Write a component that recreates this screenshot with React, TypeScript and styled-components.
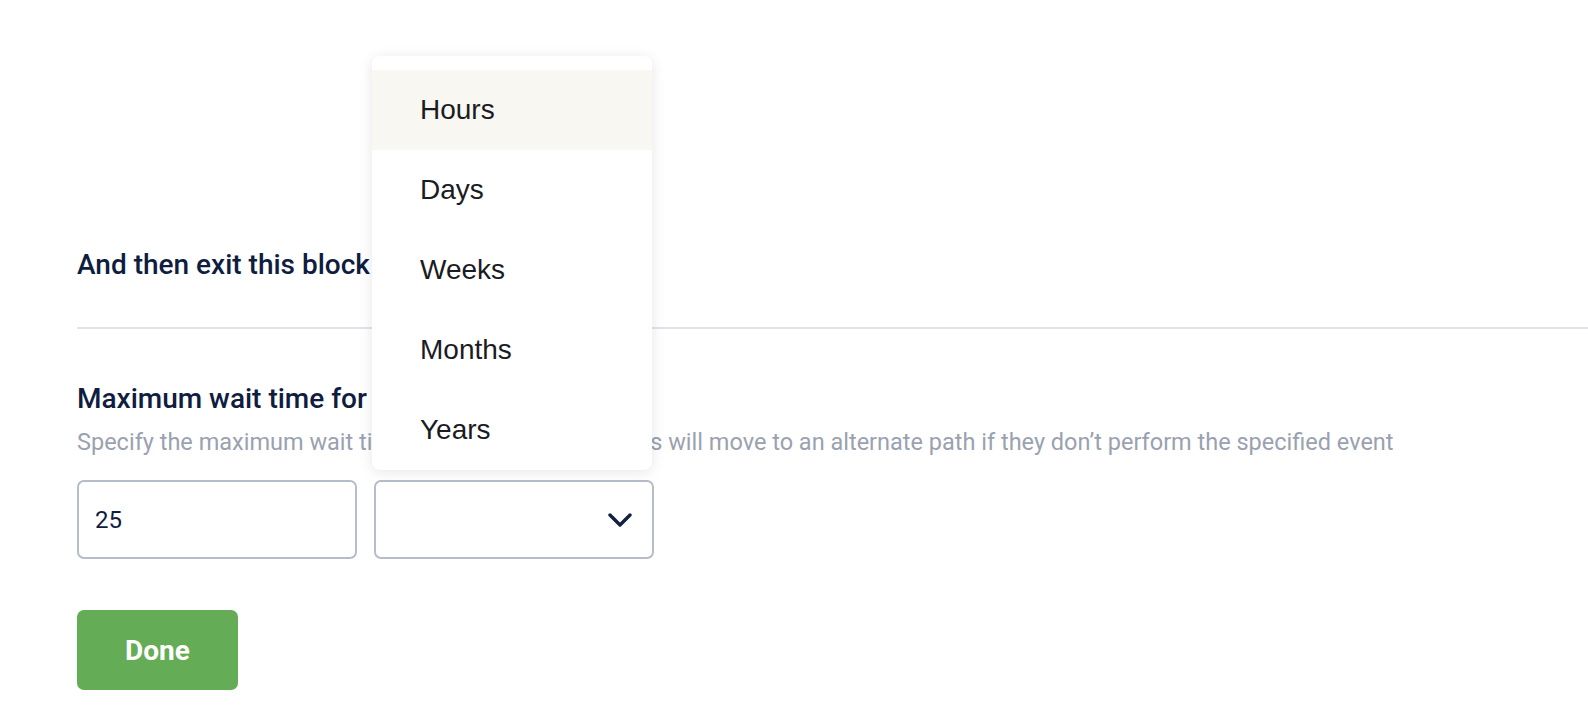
import React from "react";
import styled, { createGlobalStyle } from "styled-components";

const Global = createGlobalStyle`
  html, body { margin: 0; padding: 0; background: #ffffff; }
  body { font-family: Roboto, "Liberation Sans", sans-serif; }
`;

const Page = styled.div`
  width: 1588px;
  height: 724px;
  overflow: hidden;
  box-sizing: border-box;
  padding-top: 248px;
  display: flex;
  flex-direction: column;
`;

const Section = styled.section<{ $gap?: number }>`
  padding-left: 77px;
  margin-top: ${(p) => p.$gap ?? 0}px;
  display: flex;
  flex-direction: column;
`;

const Heading = styled.h3`
  margin: 0;
  font-family: Roboto, "Liberation Sans", sans-serif;
  font-weight: 500;
  font-size: 28px;
  line-height: 34px;
  color: #0f1d40;
`;

const Divider = styled.hr`
  border: none;
  height: 2px;
  background: #e1e1e8;
  margin: 45px 0 0 77px;
`;

const Description = styled.p`
  margin: 11px 0 0;
  font-size: 23.5px;
  line-height: 30px;
  color: #9aa1b0;
  white-space: nowrap;
`;

const Row = styled.div`
  display: flex;
  gap: 17px;
  margin-top: 23px;
`;

const Field = styled.div`
  position: relative;
  width: 280px;
  height: 79px;
  box-sizing: border-box;
  border: 2px solid #b6bcc8;
  border-radius: 7px;
  display: flex;
  align-items: center;
  padding: 0 16px;
  font-size: 24px;
  color: #0f1d40;
`;

const SelectField = styled(Field)`
  justify-content: flex-end;
  padding-right: 20px;
`;

const Menu = styled.ul`
  position: absolute;
  left: -4px;
  bottom: calc(100% + 12px);
  width: 280px;
  margin: 0;
  padding: 14px 0 0;
  list-style: none;
  background: #fff;
  border-radius: 8px;
  box-shadow: 0 2px 14px rgba(0, 0, 0, 0.1);
  overflow: hidden;
`;

const MenuItem = styled.li<{ $active?: boolean }>`
  height: 80px;
  display: flex;
  align-items: center;
  padding-left: 48px;
  font-family: "Liberation Sans", Arial, sans-serif;
  font-size: 28px;
  color: #1a1c22;
  background: ${(p) => (p.$active ? "#f8f7f2" : "transparent")};
`;

const DoneButton = styled.button`
  margin-top: 51px;
  width: 161px;
  height: 80px;
  border: none;
  border-radius: 7px;
  background: #64ac55;
  color: #fff;
  font-family: Roboto, "Liberation Sans", sans-serif;
  font-weight: 700;
  font-size: 28px;
  cursor: pointer;
`;

const units = ["Hours", "Days", "Weeks", "Months", "Years"];

export default function App() {
  return (
    <>
      <Global />
      <Page>
        <Section>
          <Heading>And then exit this block</Heading>
        </Section>
        <Divider />
        <Section $gap={53}>
          <Heading>Maximum wait time for event</Heading>
          <Description>
            Specify the maximum wait time for event, then the users will move to an alternate path if they don’t perform the specified event
          </Description>
          <Row>
            <Field>25</Field>
            <SelectField>
              <Menu>
                {units.map((u, i) => (
                  <MenuItem key={u} $active={i === 0}>
                    {u}
                  </MenuItem>
                ))}
              </Menu>
              <svg width="24" height="14" viewBox="0 0 24 14" fill="none">
                <path d="M2 2l10 10L22 2" stroke="#14203f" strokeWidth="3.4" strokeLinecap="round" strokeLinejoin="round" />
              </svg>
            </SelectField>
          </Row>
          <div>
            <DoneButton>Done</DoneButton>
          </div>
        </Section>
      </Page>
    </>
  );
}
